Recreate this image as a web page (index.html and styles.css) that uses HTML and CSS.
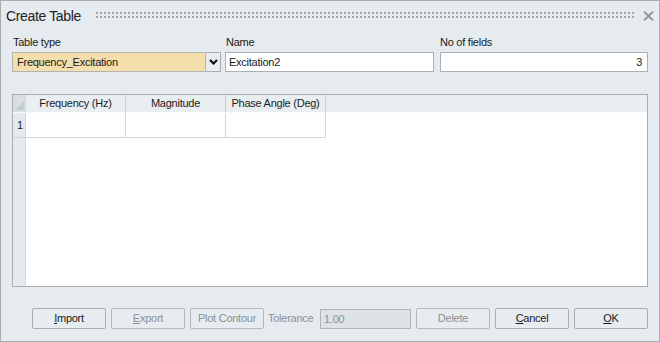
FILE: index.html
```html
<!DOCTYPE html>
<html>
<head>
<meta charset="utf-8">
<link rel="stylesheet" href="styles.css">
</head>
<body>
<div class="dialog">
  <div class="titlebar">
    <span class="title">Create Table</span>
    <span class="grip"></span>
    <svg class="close" width="11" height="10" viewBox="0 0 11 10"><path d="M1 0.5 L10 9.5 M10 0.5 L1 9.5" stroke="#8e9396" stroke-width="1.8" fill="none"/></svg>
  </div>
  <div class="fields">
    <div class="field">
      <div class="label">Table type</div>
      <div class="combo">
        <div class="combo-value">Frequency_Excitation</div>
        <div class="combo-btn"><svg width="9" height="6" viewBox="0 0 9 6"><path d="M1 1 L4.5 4.5 L8 1" stroke="#111" stroke-width="2.2" fill="none"/></svg></div>
      </div>
    </div>
    <div class="field">
      <div class="label">Name</div>
      <div class="input">Excitation2</div>
    </div>
    <div class="field">
      <div class="label">No of fields</div>
      <div class="input num">3</div>
    </div>
  </div>
  <div class="grid">
    <div class="grid-head">
      <div class="corner"><span class="tri"></span></div>
      <div class="hcell">Frequency (Hz)</div>
      <div class="hcell">Magnitude</div>
      <div class="hcell">Phase Angle (Deg)</div>
    </div>
    <div class="grid-row">
      <div class="rowhead">1</div>
      <div class="cell"></div>
      <div class="cell"></div>
      <div class="cell"></div>
    </div>
  </div>
  <div class="buttons">
    <button class="btn"><u>I</u>mport</button>
    <button class="btn dis"><u>E</u>xport</button>
    <button class="btn dis">Plot Contour</button>
    <span class="tol-label">Tolerance</span>
    <div class="tol-input">1.00</div>
    <button class="btn dis gap">Delete</button>
    <button class="btn"><u>C</u>ancel</button>
    <button class="btn"><u>O</u>K</button>
  </div>
</div>
</body>
</html>
```

FILE: styles.css
```css
* { box-sizing: border-box; }
html, body { margin: 0; padding: 0; }
body {
  width: 660px;
  height: 342px;
  background: #e5ebee;
  font-family: "Liberation Sans", Arial, sans-serif;
  font-size: 11px;
  letter-spacing: -0.25px;
  color: #1b1b1b;
  overflow: hidden;
}
.dialog {
  width: 660px;
  height: 342px;
  border: 1px solid #a7adb1;
  background: #e5ebee;
  display: flex;
  flex-direction: column;
}
.titlebar {
  height: 29px;
  display: flex;
  align-items: center;
  padding-left: 5px;
  padding-right: 5px;
}
.title {
  font-size: 14px;
  letter-spacing: -0.35px;
  color: #222;
}
.grip {
  flex: 1;
  height: 6px;
  margin-left: 15px;
  margin-right: 9px;
  margin-top: -1px;
  display: flex;
  flex-direction: column;
  justify-content: space-between;
}
.grip::before, .grip::after {
  content: "";
  display: block;
  height: 2px;
  background: repeating-linear-gradient(90deg, #a4a9ac 0 2px, transparent 2px 4px);
}
.close { display: block; }
.fields {
  display: grid;
  grid-template-columns: 209px 210px 209px;
  column-gap: 4px;
  padding-left: 11px;
  margin-top: 5px;
}
.field { display: flex; flex-direction: column; }
.label { height: 14px; line-height: 14px; padding-left: 1px; }
.combo {
  margin-top: 3px;
  height: 20px;
  display: flex;
}
.combo-value {
  flex: 1;
  background: #f3deac;
  border: 1px solid #b3b3b3;
  padding-left: 4px;
  line-height: 18px;
}
.combo-btn {
  width: 15px;
  border: 1px solid #a9adb0;
  border-left: none;
  background: #e8edf0;
  display: flex;
  align-items: center;
  justify-content: center;
}
.input {
  margin-top: 3px;
  height: 20px;
  background: #fff;
  border: 1px solid #abb0b4;
  padding: 0 4px 0 3px;
  line-height: 18px;
}
.field:nth-child(2) .input { width: 209px; }
.field:nth-child(3) .input { margin-left: 1px; }
.input.num { text-align: right; padding-right: 5px; }
.grid {
  margin: 22px 11px 0 11px;
  height: 193px;
  border: 1px solid #a9aeb2;
  background: linear-gradient(90deg, #e4eaed 0 12px, #d6dadd 12px 13px, #fff 13px);
}
.grid-head {
  display: flex;
  height: 18px;
  background: #e9eef1;
  border-bottom: 1px solid #fafbfc;
}
.corner {
  width: 13px;
  border-right: 1px solid #d0d5d8;
  background: #d7dfe4;
  position: relative;
}
.tri {
  position: absolute;
  right: 1px;
  bottom: 2px;
  width: 0;
  height: 0;
  border-left: 9px solid transparent;
  border-bottom: 9px solid #c1ccd3;
}
.hcell {
  width: 100px;
  border-right: 1px solid #c9cfd3;
  text-align: center;
  line-height: 17px;
}
.grid-row {
  display: flex;
  height: 25px;
}
.rowhead {
  width: 13px;
  border-right: 1px solid #d3d7da;
  border-bottom: 1px solid #d3d7da;
  padding-left: 4px;
  line-height: 25px;
}
.cell {
  width: 100px;
  border-right: 1px solid #d3d7da;
  border-bottom: 1px solid #d3d7da;
  background: #fff;
}
.buttons {
  display: flex;
  margin-top: 21px;
  padding-left: 31px;
  height: 21px;
  align-items: stretch;
}
.btn {
  width: 74px;
  height: 21px;
  margin: 0 5px 0 0;
  padding: 0;
  font: inherit;
  letter-spacing: inherit;
  color: #1b1b1b;
  background: #e6ecef;
  border: 1px solid #a9aeb2;
  border-radius: 2px;
  text-align: center;
  line-height: 19px;
}
.btn.dis { color: #8b9094; border-color: #b4b9bc; }
.btn u { text-decoration: underline; text-underline-offset: 1px; }
.btn.dis:nth-of-type(3) { margin-right: 4px; }
.tol-label {
  color: #8b9094;
  line-height: 21px;
  width: 48px;
  margin-right: 4px;
}
.tol-input {
  width: 91px;
  height: 20px;
  background: #dde3e6;
  border: 1px solid #b0b5b8;
  color: #8e9396;
  padding-left: 3px;
  line-height: 18px;
  margin-top: 1px;
  margin-right: 5px;
}
```
